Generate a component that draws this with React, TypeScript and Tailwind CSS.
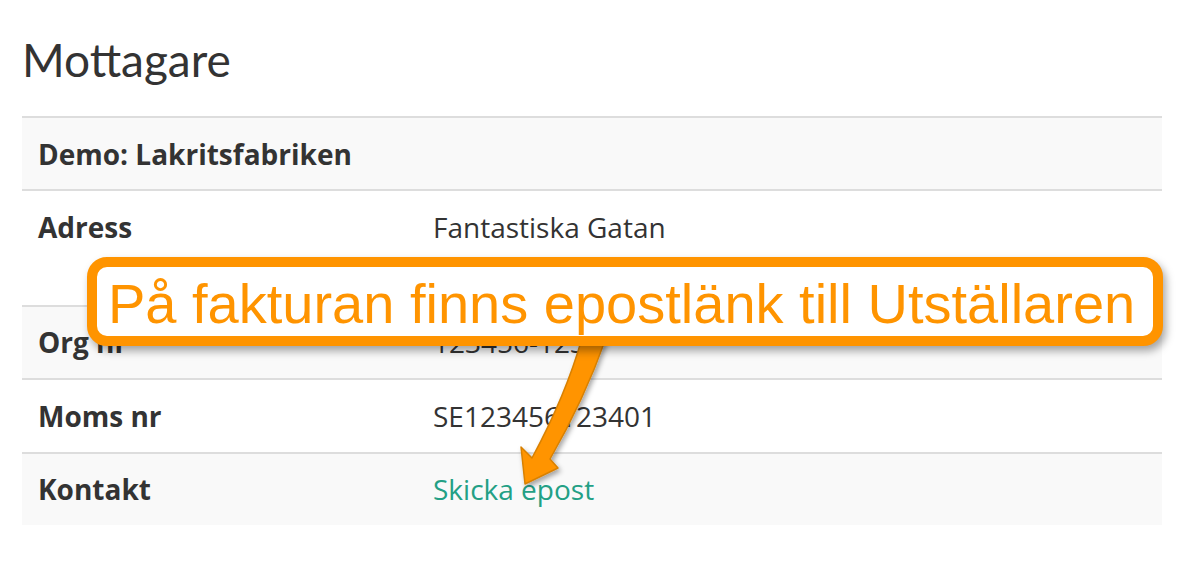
const rows = [
  { label: "Adress", value: ["Fantastiska Gatan", "123 45 Godisstaden"], striped: false },
  { label: "Org nr", value: ["123456-1234"], striped: true },
  { label: "Moms nr", value: ["SE123456123401"], striped: false },
];

const Callout = () => (
  <>
    <svg
      className="pointer-events-none absolute left-0 top-0"
      width="1184"
      height="568"
      viewBox="0 0 1184 568"
    >
      <defs>
        <filter id="arrowShadow" x="-50%" y="-50%" width="200%" height="200%">
          <feDropShadow dx="2" dy="3" stdDeviation="2.5" floodColor="#000" floodOpacity="0.35" />
        </filter>
      </defs>
      <path
        d="M582 338 Q566 395 532 458 L521 447 L525 484 L558 468 L550 459 Q584 400 606 338 Z"
        fill="#ff9400"
        stroke="#d88000"
        strokeWidth="1.5"
        strokeLinejoin="round"
        filter="url(#arrowShadow)"
      />
    </svg>
    <div className="absolute left-[87px] top-[257px] box-border h-[89px] w-[1076px] rounded-[20px] border-[10px] border-[#ff9400] bg-white pl-[11px] pt-[2px] shadow-[3px_5px_8px_rgba(0,0,0,0.35)]">
      <p className="whitespace-nowrap font-['Liberation_Sans',Arial,sans-serif] text-[56px] leading-[69px] text-[#ff9400]">
        På fakturan finns epostlänk till Utställaren
      </p>
    </div>
  </>
);

export default function App() {
  return (
    <div className="relative h-[568px] w-[1184px] overflow-hidden bg-white px-[22px] pt-[37px] text-[#333]">
      <h2 className="font-['Lato',sans-serif] text-[46px] font-normal leading-[46px]">Mottagare</h2>

      <div className="mt-[33px] w-[1140px] font-['Open_Sans',sans-serif] text-[28px] leading-[42px]">
        <div className="border-t-2 border-[#ddd] bg-[#f9f9f9] px-[16px] py-[14.7px] font-bold">
          Demo: Lakritsfabriken
        </div>
        {rows.map((row) => (
          <div
            key={row.label}
            className={`grid grid-cols-[396px_1fr] border-t-2 border-[#ddd] ${row.striped ? "bg-[#f9f9f9]" : "bg-white"}`}
          >
            <div className="px-[16px] py-[14.7px] font-bold">{row.label}</div>
            <div className="px-[15px] py-[14.7px]">
              {row.value.map((line) => (
                <div key={line}>{line}</div>
              ))}
            </div>
          </div>
        ))}
        <div className="grid grid-cols-[396px_1fr] border-t-2 border-[#ddd] bg-[#f9f9f9]">
          <div className="px-[16px] py-[14.7px] font-bold">Kontakt</div>
          <div className="px-[15px] py-[14.7px]">
            <a href="#" className="text-[#23a085]">
              Skicka epost
            </a>
          </div>
        </div>
      </div>

      <Callout />
    </div>
  );
}
